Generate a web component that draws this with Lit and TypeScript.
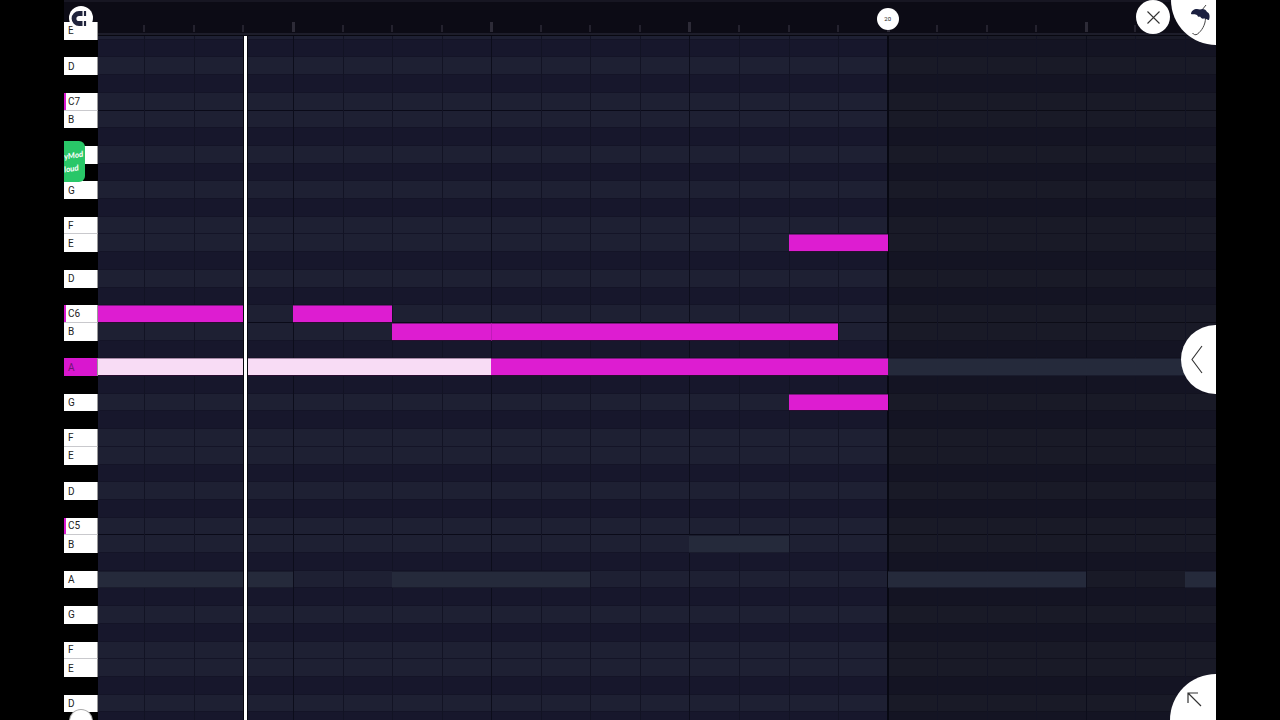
import { LitElement, html, css, svg } from "lit";
import { customElement } from "lit/decorators.js";
import { classMap } from "lit/directives/class-map.js";
import { styleMap } from "lit/directives/style-map.js";

interface Note {
  row: number;
  from: number;
  to: number;
  kind: "note" | "ghost" | "playing";
}

const NAMES = ["E", "", "D", "", "C", "B", "", "A", "", "G", "", "F"];
const ROWS = 40;
const START = 0.065;
const VISIBLE = 22.56;
const END_STEP = 16;

const at = (step: number) => `${(((step - START) / VISIBLE) * 100).toFixed(3)}%`;
const span = (n: number) => `${((n / VISIBLE) * 100).toFixed(3)}%`;
const rowAt = (row: number) => `${(row / ROWS) * 100}%`;

const NOTES: Note[] = [
  { row: 19, from: 16, to: 23, kind: "ghost" },
  { row: 29, from: 12, to: 14, kind: "ghost" },
  { row: 31, from: 0, to: 4, kind: "ghost" },
  { row: 31, from: 6, to: 10, kind: "ghost" },
  { row: 31, from: 16, to: 20, kind: "ghost" },
  { row: 31, from: 22, to: 23, kind: "ghost" },
  { row: 12, from: 14, to: 16, kind: "note" },
  { row: 16, from: 0, to: 3, kind: "note" },
  { row: 16, from: 4, to: 6, kind: "note" },
  { row: 17, from: 6, to: 8, kind: "note" },
  { row: 17, from: 8, to: 15, kind: "note" },
  { row: 19, from: 0, to: 8, kind: "playing" },
  { row: 19, from: 8, to: 16, kind: "note" },
  { row: 21, from: 14, to: 16, kind: "note" },
];

@customElement("piano-keys")
class PianoKeys extends LitElement {
  static styles = css`
    :host { display: grid; grid-template-rows: repeat(40, minmax(0, 1fr)); background: #000; }
    .key {
      box-sizing: border-box;
      display: flex;
      align-items: center;
      width: 100%;
      margin: 0;
      padding: 1px 0 0 4px;
      border: 0;
      background: #000;
      color: #222;
      font: 10px/12px Roboto, sans-serif;
      text-align: left;
    }
    .white { background: #fff; border-right: 1px solid #999; }
    .joined { border-bottom: 1px solid #c9c9cd; }
    .root { box-shadow: inset 2px 0 #d916cf; }
    .held { background: #d917cf; color: #6d1670; }
  `;
  render() {
    return Array.from({ length: ROWS }, (_, i) => {
      const n = NAMES[i % 12];
      const root = n === "C";
      const label = root ? `C${7 - Math.floor(i / 12)}` : n;
      return html`<button
        class=${classMap({ key: true, white: n !== "", root, joined: root || n === "F", held: i === 19 })}
        aria-label=${label || "Black key"}
      >${label}</button>`;
    });
  }
}

@customElement("note-lanes")
class NoteLanes extends LitElement {
  static styles = css`
    :host { display: block; position: relative; overflow: hidden; }
    .lanes { display: grid; grid-template-rows: repeat(40, minmax(0, 1fr)); height: 100%; }
    .lane { background: #17172c; box-shadow: inset 0 -1px #141427; }
    .natural { background: #1e2033; }
    .octave { box-shadow: inset 0 -1px #0a0a18; }
    .past { position: absolute; inset: 0 0 0 auto; background: rgba(18, 18, 20, 0.36); }
    .line { position: absolute; top: 0; bottom: 0; width: 1px; background: #121324; }
    .beat { background: #0c0d1b; }
    .bar { width: 2px; margin-left: -1px; background: #070812; }
    .note { position: absolute; box-sizing: border-box; height: 2.5%; background: #dd1dd1; border-bottom: 1px solid #2a0d30; border-top: 1px solid #7c1880; }
    .playing { background: #f8dcf5; border-top-color: #a78aa8; }
    .ghost { background: #252a3b; border-color: #1a1c2d; }
    .seam { border-left: 1px solid #c01bb9; }
    .head { position: absolute; top: 0; bottom: 0; box-sizing: border-box; width: 5px; margin-left: -2px; background: #fff; border: solid #08080f; border-width: 0 1px; }
  `;
  render() {
    return html`
      <div class="lanes">
        ${Array.from({ length: ROWS }, (_, i) => html`<div class=${classMap({
          lane: true, natural: NAMES[i % 12] !== "", octave: i % 12 === 4,
        })}></div>`)}
      </div>
      <div class="past" style=${styleMap({ left: at(END_STEP) })}></div>
      ${Array.from({ length: 22 }, (_, i) => i + 1).map((s) => html`<div
        class=${classMap({ line: true, beat: s % 4 === 0, bar: s === END_STEP })}
        style=${styleMap({ left: at(s) })}></div>`)}
      ${NOTES.map((n) => html`<div
        class=${classMap({ note: true, [n.kind]: true, seam: n.row === 17 && n.from === 8 })}
        style=${styleMap({ left: at(n.from), width: span(n.to - n.from), top: rowAt(n.row) })}></div>`)}
      <div class="head" style=${styleMap({ left: at(3.03) })}></div>
    `;
  }
}

@customElement("time-ruler")
class TimeRuler extends LitElement {
  static styles = css`
    :host { display: block; position: relative; box-sizing: border-box; background: #0c0b15; }
    .tick { position: absolute; bottom: 3px; width: 2px; height: 7px; margin-left: -1px; background: #24222e; }
    .beat { width: 3px; height: 10px; background: #2d2b37; }
    .marker {
      position: absolute; top: 6px; width: 22px; height: 22px; margin-left: -11px; padding: 0;
      border: 0; border-radius: 50%; background: #fff; color: #222; font: 6px/22px Roboto, sans-serif; text-align: center;
    }
  `;
  render() {
    return html`
      ${Array.from({ length: 22 }, (_, i) => i + 1).map((s) => html`<div
        class=${classMap({ tick: true, beat: s % 4 === 0 })} style=${styleMap({ left: at(s) })}></div>`)}
      <button class="marker" style=${styleMap({ left: at(END_STEP) })}>20</button>
    `;
  }
}

@customElement("app-root")
class AppRoot extends LitElement {
  static styles = css`
    :host { display: block; height: 100vh; background: #000; font-family: Roboto, sans-serif; }
    .stage {
      position: relative; display: grid; grid-template: 36px minmax(0, 1fr) / 34px minmax(0, 1fr);
      height: 100%; margin: 0 5vw; overflow: hidden; background: #000;
    }
    .top { grid-area: 1 / 1 / 2 / 3; background: #0c0b15; border-top: 2px solid #171622; }
    time-ruler { grid-area: 1 / 2; z-index: 1; border-top: 2px solid #171622; border-bottom: 1px solid #080810; }
    time-ruler::after { content: ""; position: absolute; inset: auto 0 0; height: 2px; background: #1d1d2a; }
    piano-keys { grid-area: 1 / 1 / 3 / 2; margin: 22px 0 -10px; }
    note-lanes { grid-area: 1 / 2 / 3 / 3; margin: 22px 0 -10px; }
    .round { position: absolute; z-index: 2; display: grid; place-items: center; padding: 0; border: 0; border-radius: 50%; background: #fff; }
    .magnet { left: 5px; top: 6px; width: 24px; height: 24px; overflow: hidden; }
    .knob { left: 6px; bottom: -12px; width: 22px; height: 22px; box-shadow: 0 0 0 1px #aaa; }
    .close { right: 46px; top: 0; width: 34px; height: 34px; }
    .brand { right: -45px; top: -45px; width: 90px; height: 90px; }
    .side { right: -34px; top: calc(50% - 35px); width: 69px; height: 69px; }
    .corner { right: -46px; bottom: -46px; width: 92px; height: 92px; }
    .art { position: absolute; z-index: 3; overflow: visible; pointer-events: none; fill: none; stroke: #333; }
    .brand-art { right: 0; top: 0; }
    .side-art { right: 10px; top: calc(50% - 16px); }
    .corner-art { right: 12px; bottom: 11px; }
    .badge {
      position: absolute; z-index: 2; left: 0; top: 141px; box-sizing: border-box; width: 21px; height: 41px; padding-top: 8px;
      border-radius: 0 6px 6px 0; background: #29c768; color: #fff;
      font: italic 700 8px/13px Lato, sans-serif;
    }
    .badge-text { display: block; transform: rotate(-9deg); }
  `;
  render() {
    return html`
      <main class="stage">
        <div class="top"></div>
        <piano-keys></piano-keys>
        <note-lanes></note-lanes>
        <time-ruler></time-ruler>
        <button class="round magnet" aria-label="Snap">
          <svg width="24" height="24" viewBox="0 0 24 24">${svg`
            <path d="M13.500 7.500H10a5 5 0 0 0 0 10H13.500" fill="none" stroke="#20243c" stroke-width="4.800"/>
            <path d="M16 5v5M16 15v5" stroke="#20243c" stroke-width="2.200"/>`}
          </svg>
        </button>
        <div class="badge"><span class="badge-text">yMod</span><span class="badge-text">loud</span></div>
        <button class="round knob" aria-label="Scroll"></button>
        <button class="round close" aria-label="Close">
          <svg width="13" height="13" viewBox="0 0 13 13"><path d="M.5.5l12 12M12.5.5l-12 12" stroke="#333" stroke-width="1.1"/></svg>
        </button>
        <button class="round brand" aria-label="Menu"></button>
        <svg class="art brand-art" width="46" height="46" viewBox="0 0 46 46">
          <path d="M36 5l-4 5M35.500 18c0 7-4 13-8 16-2 1.500-4 .5-5-1" stroke="#444" stroke-width="1"/>
          <path d="M21 14c0-3 3-5 6-5 1 0 2 .5 3 .5 3-1.500 6 0 7 2.500 3 1 3 5 2 8-2 0-3-2-5-1.500-2 .5-3-.5-4-2-1 .5-2 .5-3-1.500-2-1.500-4-.5-6-1z" fill="#1b2040" stroke="none"/>
        </svg>
        <button class="round side" aria-label="Open panel"></button>
        <svg class="art side-art" width="17" height="31" viewBox="0 0 17 31"><path d="M13 2L3 15.500l10 13.500" stroke-width="1.1"/></svg>
        <button class="round corner" aria-label="Expand"></button>
        <svg class="art corner-art" width="18" height="18" viewBox="0 0 18 18"><path d="M2 12V2h10M2 2l13 13" stroke-width="1.2"/></svg>
      </main>
    `;
  }
}
